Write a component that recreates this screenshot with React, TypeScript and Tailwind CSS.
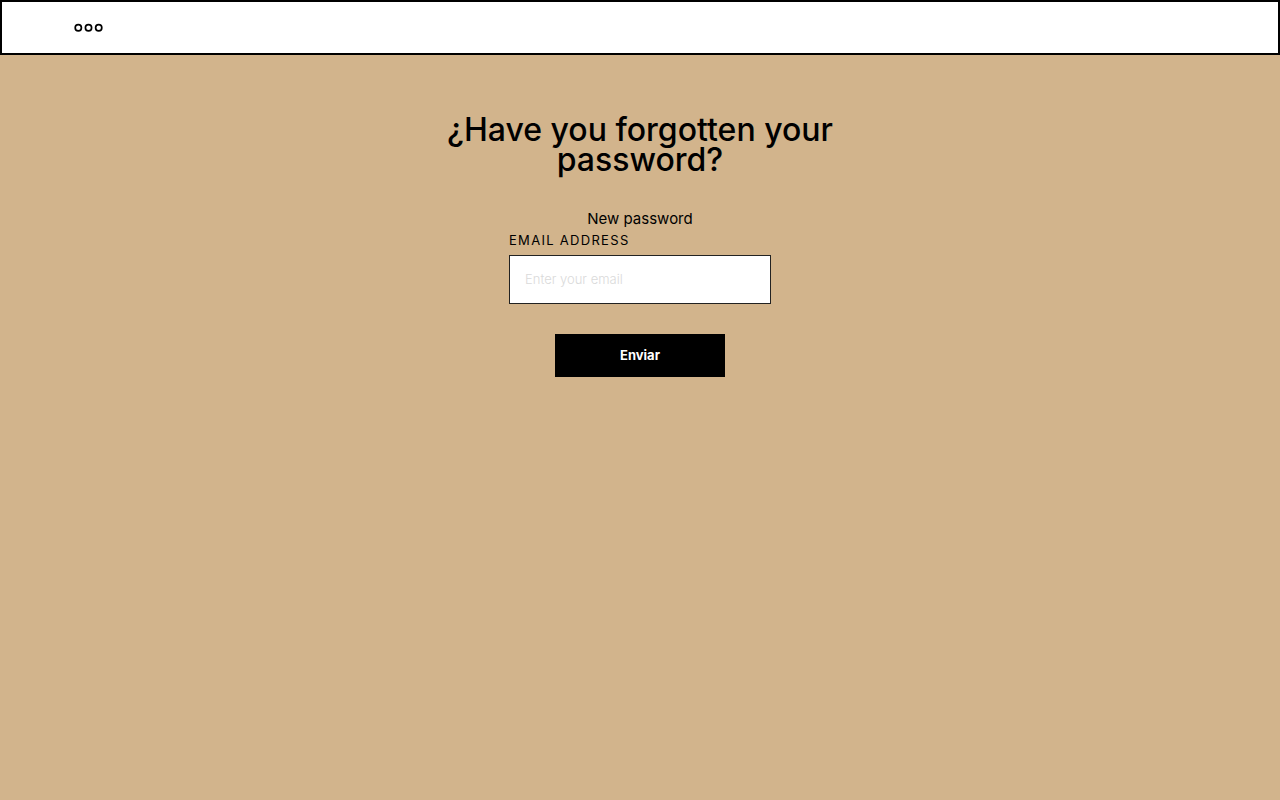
import React from "react";

function MenuIcon() {
  return (
    <svg width="30" height="10" viewBox="0 0 30 10" fill="none" stroke="currentColor" strokeWidth="1.7" aria-hidden="true">
      <circle cx="5.3" cy="4.8" r="3.1" />
      <circle cx="15.5" cy="4.8" r="3.1" />
      <circle cx="25.7" cy="4.8" r="3.1" />
    </svg>
  );
}

export default function App() {
  return (
    <div className="flex min-h-screen flex-col bg-[#d2b48c] font-['Inter',sans-serif] text-black">
      <header className="flex h-[55px] items-center border-2 border-black bg-white px-[71px]">
        <button type="button" aria-label="Menu">
          <MenuIcon />
        </button>
      </header>
      <main className="flex flex-col items-center px-4 pt-[60px]">
        <h1 className="max-w-[400px] text-center text-[32px] leading-[30px] font-medium">
          ¿Have you forgotten your password?
        </h1>
        <p className="mt-8 text-[15px] leading-6">New password</p>
        <form className="flex w-full max-w-[262px] flex-col" onSubmit={(e) => e.preventDefault()}>
          <label htmlFor="email" className="text-[13px] leading-[18px] tracking-widest uppercase">
            Email address
          </label>
          <input
            id="email"
            type="email"
            placeholder="Enter your email"
            className="mt-[6px] h-[49px] w-full border border-[#222222] bg-white px-[15px] pb-[2px] text-[13px] font-light outline-none placeholder:text-[#dadada]"
          />
          <button type="submit" className="mt-[30px] h-[43px] w-[170px] self-center bg-black text-[13px] font-bold text-white">
            Enviar
          </button>
        </form>
      </main>
    </div>
  );
}
